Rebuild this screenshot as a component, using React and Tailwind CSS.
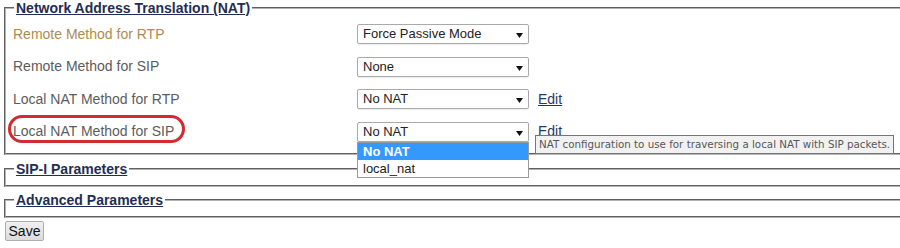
import React from "react";

const rows = [
  { label: "Remote Method for RTP", value: "Force Passive Mode", hot: true },
  { label: "Remote Method for SIP", value: "None" },
  { label: "Local NAT Method for RTP", value: "No NAT", edit: true },
  { label: "Local NAT Method for SIP", value: "No NAT", edit: true, open: true },
];

const Arrow = () => (
  <svg width="7" height="5" viewBox="0 0 7 5" className="absolute right-[5px] top-[8px]">
    <path d="M0 0 L7 0 L3.5 5 Z" fill="#111" />
  </svg>
);

const FakeSelect = ({ value, open }) => (
  <div className="relative w-[172px] h-[20px] bg-white border border-[#a9a9a9] rounded-[2px] shadow-[0_1px_1px_rgba(0,0,0,0.08)] text-[13px] leading-[18px] text-[#222] pl-[5px]">
    {value}
    <Arrow />
    {open && (
      // lista desplegada
      <div className="absolute left-[-1px] top-[19px] w-[172px] bg-white border border-[#9a9a9a] z-10 text-[13px] leading-[17px]">
        <div className="bg-[#3399ff] text-white font-semibold pl-[5px] h-[17px]">No NAT</div>
        <div className="text-[#222] pl-[5px] h-[17px]">local_nat</div>
      </div>
    )}
  </div>
);

const Legend = ({ children }) => (
  <legend className="ml-px px-[2px] text-[14px] leading-4 font-bold underline text-[#1f2f52]">
    {children}
  </legend>
);

export default function App() {
  return (
    <div className="relative w-[900px] h-[248px] overflow-hidden bg-white font-['Liberation_Sans',Arial,sans-serif]">
      <fieldset className="ml-[4px] w-[920px] border-2 [border-style:groove] border-[#b4b4b4] pl-[7px] pt-[2px] pb-[5px]">
        <Legend>Network Address Translation (NAT)</Legend>
        {rows.map((r) => (
          <div key={r.label} className="flex items-center h-[32.5px]">
            <span
              className={`w-[344px] text-[14px] ${r.hot ? "text-[#ad8c4e]" : "text-[#5c5c5c]"}`}
            >
              {r.label}
            </span>
            <FakeSelect value={r.value} open={r.open} />
            {r.edit && (
              <span className="relative ml-[9px] text-[14px] underline text-[#1f3a66]">
                Edit
                {r.open && (
                  <span className="absolute left-[-3px] top-[14px] z-20 whitespace-nowrap bg-[#f1f1f1] border border-[#767676] px-[3px] h-[19px] leading-[17px] text-[10.3px] text-[#575757] font-['DejaVu_Sans',Verdana,sans-serif] no-underline inline-block">
                    NAT configuration to use for traversing a local NAT with SIP packets.
                  </span>
                )}
              </span>
            )}
          </div>
        ))}
      </fieldset>

      <fieldset className="mt-[6px] ml-[4px] w-[920px] border-2 [border-style:groove] border-[#b4b4b4] pl-[7px] pb-[8px]">
        <Legend>SIP-I Parameters</Legend>
      </fieldset>

      <fieldset className="mt-[5px] ml-[4px] w-[920px] border-2 [border-style:groove] border-[#b4b4b4] pl-[7px] pb-[8px]">
        <Legend>Advanced Parameters</Legend>
      </fieldset>

      <button className="mt-[3px] ml-[5px] w-[39px] h-[20px] bg-gradient-to-b from-[#f0f0f0] to-[#dcdcdc] border border-[#adadad] rounded-[2px] text-[14px] leading-[18px] text-[#111]">
        Save
      </button>

      {/* marca roja sobre la etiqueta */}
      <div className="absolute left-[8px] top-[115px] w-[177px] h-[28px] border-[3px] border-[#d42a30] rounded-[14px] pointer-events-none" />
    </div>
  );
}
